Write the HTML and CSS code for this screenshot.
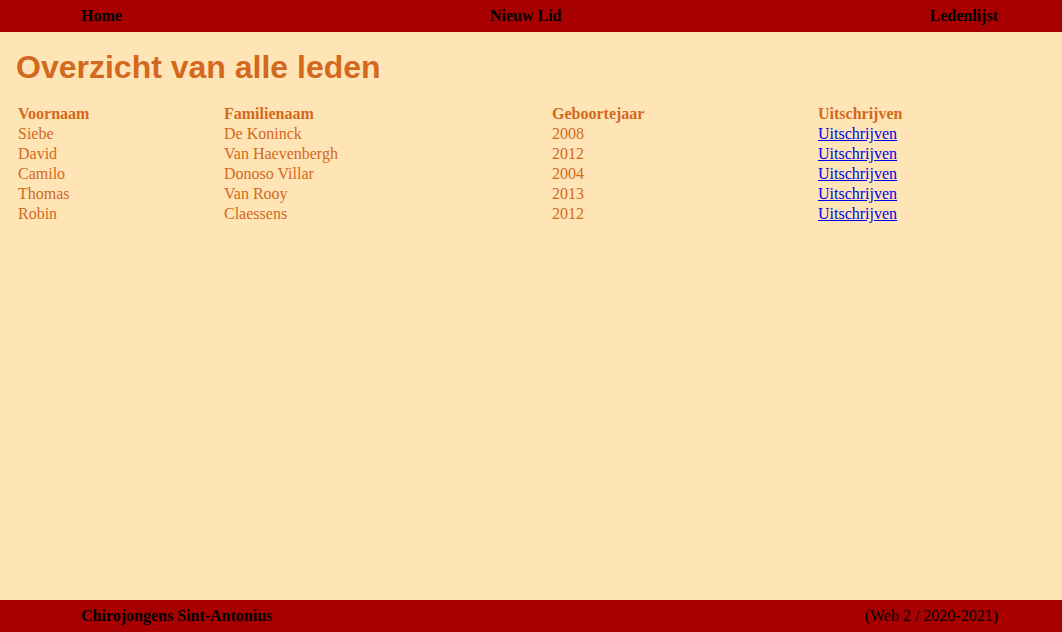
FILE: index.html
```html
<!DOCTYPE html>
<html lang="nl">
<head>
<meta charset="utf-8">
<title>Ledenlijst</title>
<link rel="stylesheet" href="styles.css">
</head>
<body>
<header class="topbar">
  <nav class="nav">
    <a class="nav-link" href="#">Home</a>
    <a class="nav-link" href="#">Nieuw Lid</a>
    <a class="nav-link" href="#">Ledenlijst</a>
  </nav>
</header>
<main class="content">
  <h1 class="title">Overzicht van alle leden</h1>
  <div class="members">
    <div class="cell head">Voornaam</div>
    <div class="cell head">Familienaam</div>
    <div class="cell head">Geboortejaar</div>
    <div class="cell head">Uitschrijven</div>

    <div class="cell">Siebe</div>
    <div class="cell">De Koninck</div>
    <div class="cell">2008</div>
    <div class="cell"><a class="unsub" href="#">Uitschrijven</a></div>

    <div class="cell">David</div>
    <div class="cell">Van Haevenbergh</div>
    <div class="cell">2012</div>
    <div class="cell"><a class="unsub" href="#">Uitschrijven</a></div>

    <div class="cell">Camilo</div>
    <div class="cell">Donoso Villar</div>
    <div class="cell">2004</div>
    <div class="cell"><a class="unsub" href="#">Uitschrijven</a></div>

    <div class="cell">Thomas</div>
    <div class="cell">Van Rooy</div>
    <div class="cell">2013</div>
    <div class="cell"><a class="unsub" href="#">Uitschrijven</a></div>

    <div class="cell">Robin</div>
    <div class="cell">Claessens</div>
    <div class="cell">2012</div>
    <div class="cell"><a class="unsub" href="#">Uitschrijven</a></div>
  </div>
</main>
<footer class="footer">
  <span class="footer-name">Chirojongens Sint-Antonius</span>
  <span class="footer-info">(Web 2 / 2020-2021)</span>
</footer>
</body>
</html>
```

FILE: styles.css
```css
html, body {
  margin: 0;
  padding: 0;
}

body {
  min-height: 100vh;
  display: flex;
  flex-direction: column;
  background: #FFE4B5;
  font-family: "Liberation Serif", "Times New Roman", serif;
  font-size: 16px;
}

.topbar {
  height: 32px;
  background: #A80000;
  flex: 0 0 auto;
}

.nav {
  height: 32px;
  display: flex;
  justify-content: space-between;
  align-items: center;
  padding: 0 64px 0 81px;
}

.nav-link {
  color: #000;
  font-weight: bold;
  text-decoration: none;
  line-height: 20px;
}

.content {
  flex: 1 1 auto;
  padding: 0 16px;
}

.title {
  margin: 17px 0 0;
  font-family: "Liberation Sans", Arial, sans-serif;
  font-size: 32px;
  line-height: 37px;
  font-weight: bold;
  color: #D2691E;
}

.members {
  margin-top: 18px;
  padding-left: 2px;
  display: grid;
  grid-template-columns: 206px 328px 266px 1fr;
  color: #D2691E;
  line-height: 20px;
}

.head {
  font-weight: bold;
}

.unsub {
  color: #0000EE;
  text-decoration: underline;
}

.footer {
  height: 32px;
  flex: 0 0 auto;
  background: #A80000;
  display: flex;
  justify-content: space-between;
  align-items: center;
  padding: 0 64px 0 81px;
  color: #000;
}

.footer-name {
  font-weight: bold;
}
```
